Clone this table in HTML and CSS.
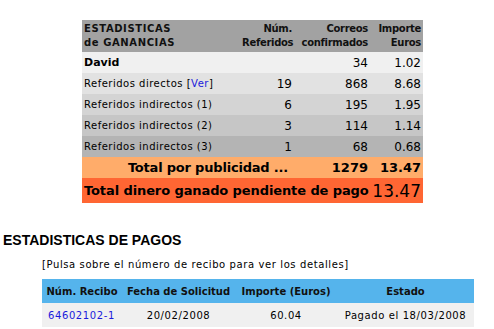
FILE: index.html
```html
<!DOCTYPE html>
<html>
<head>
<meta charset="utf-8">
<link rel="stylesheet" href="styles.css">
</head>
<body>
<div class="page">
  <table class="gains">
    <colgroup>
      <col class="g1"><col class="g2"><col class="g3"><col class="g4">
    </colgroup>
    <tr class="head">
      <th class="label">ESTADISTICAS<br>de GANANCIAS</th>
      <th class="num">Núm.<br>Referidos</th>
      <th class="num">Correos<br>confirmados</th>
      <th class="num">Importe<br>Euros</th>
    </tr>
    <tr class="r0">
      <td class="label bold">David</td>
      <td class="num"></td>
      <td class="num">34</td>
      <td class="num">1.02</td>
    </tr>
    <tr class="r1">
      <td class="label">Referidos directos [<a href="#">Ver</a>]</td>
      <td class="num">19</td>
      <td class="num">868</td>
      <td class="num">8.68</td>
    </tr>
    <tr class="r2">
      <td class="label">Referidos indirectos (1)</td>
      <td class="num">6</td>
      <td class="num">195</td>
      <td class="num">1.95</td>
    </tr>
    <tr class="r3">
      <td class="label">Referidos indirectos (2)</td>
      <td class="num">3</td>
      <td class="num">114</td>
      <td class="num">1.14</td>
    </tr>
    <tr class="r4">
      <td class="label">Referidos indirectos (3)</td>
      <td class="num">1</td>
      <td class="num">68</td>
      <td class="num">0.68</td>
    </tr>
    <tr class="total">
      <td class="tlabel" colspan="2">Total por publicidad ...</td>
      <td class="num">1279</td>
      <td class="num">13.47</td>
    </tr>
    <tr class="grand">
      <td class="glabel" colspan="3">Total dinero ganado pendiente de pago</td>
      <td class="num big">13.47</td>
    </tr>
  </table>

  <h2 class="title">ESTADISTICAS DE PAGOS</h2>
  <p class="hint">[Pulsa sobre el número de recibo para ver los detalles]</p>

  <table class="pays">
    <colgroup>
      <col class="p1"><col class="p2"><col class="p3"><col class="p4">
    </colgroup>
    <tr class="phead">
      <th>Núm. Recibo</th>
      <th>Fecha de Solicitud</th>
      <th>Importe (Euros)</th>
      <th>Estado</th>
    </tr>
    <tr class="prow">
      <td class="c1"><a href="#">64602102-1</a></td>
      <td>20/02/2008</td>
      <td>60.04</td>
      <td>Pagado el 18/03/2008</td>
    </tr>
  </table>
</div>
</body>
</html>
```
FILE: styles.css
```css
html, body {
  margin: 0;
  padding: 0;
  background: #ffffff;
}
body {
  font-family: "DejaVu Sans", Verdana, sans-serif;
  color: #000;
}
.page {
  padding-top: 20px;
}
a {
  color: #1a1adc;
  text-decoration: none;
}
.gains {
  margin-left: 82px;
  width: 341px;
  border-collapse: collapse;
  border-spacing: 0;
  table-layout: fixed;
}
.g1 { width: 158px; }
.g2 { width: 54px; }
.g3 { width: 76px; }
.g4 { width: 53px; }
.gains th, .gains td {
  padding: 0 2px 0 2px;
  white-space: nowrap;
  overflow: visible;
}
.gains .head {
  background: #a2a2a2;
  height: 32px;
}
.gains th {
  font-size: 10px;
  font-weight: bold;
  line-height: 14px;
  color: #111;
}
.gains th.label {
  text-align: left;
  letter-spacing: 0.6px;
}
.gains th.num {
  letter-spacing: -0.3px;
}
.gains .num {
  text-align: right;
}
.gains td {
  height: 21px;
  font-size: 10px;
}
.gains td.num {
  font-size: 12px;
}
.gains td.label {
  letter-spacing: 0.5px;
}
.gains td.bold {
  font-weight: bold;
  font-size: 11px;
  letter-spacing: 0;
}
.r0 { background: #f0f0f0; }
.r1 { background: #e2e2e2; }
.r2 { background: #d4d4d4; }
.r3 { background: #c6c6c6; }
.r4 { background: #b4b4b4; }
.total { background: #ffac6a; }
.total td {
  font-weight: bold;
  font-size: 13px !important;
}
.total .tlabel {
  text-align: right;
  padding-right: 6px;
  letter-spacing: -0.2px;
}
.grand { background: #ff6633; }
.grand td {
  height: 25px;
}
.grand .glabel {
  font-weight: bold;
  font-size: 13px;
  letter-spacing: -0.1px;
}
.grand td.big {
  font-size: 17px;
  font-weight: normal;
}
.title {
  font-family: "Liberation Sans", Arial, sans-serif;
  font-size: 14px;
  font-weight: bold;
  margin: 29px 0 0 3px;
}
.hint {
  font-size: 10px;
  letter-spacing: 0.6px;
  margin: 11px 0 0 42px;
}
.pays {
  margin: 9px 0 0 42px;
  width: 432px;
  border-collapse: collapse;
  table-layout: fixed;
}
.p1 { width: 80px; }
.p2 { width: 113px; }
.p3 { width: 102px; }
.p4 { width: 137px; }
.pays th, .pays td {
  white-space: nowrap;
  text-align: center;
  padding: 0;
}
.phead {
  background: #55b4ec;
  height: 24px;
}
.pays th {
  font-size: 10px;
  font-weight: bold;
  color: #111;
}
.prow {
  background: #f0f0f0;
  height: 24px;
}
.pays td {
  font-size: 10px;
  letter-spacing: 0.6px;
}
.pays td.c1 { text-align: left; padding-left: 6px; }
```
